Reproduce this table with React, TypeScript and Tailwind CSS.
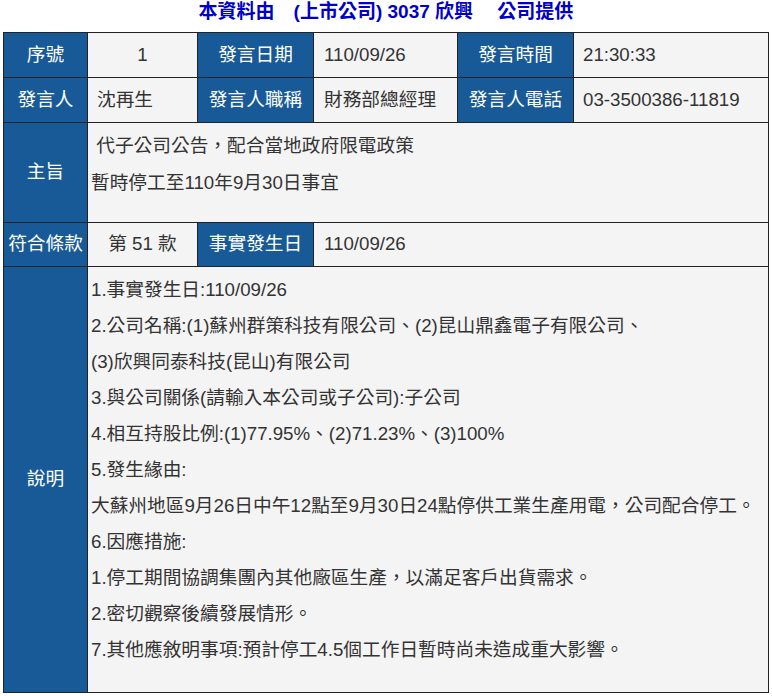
import React from 'react';

const FONT = "font-['Liberation_Sans','Noto_Sans_CJK_TC',sans-serif]";

const Head: React.FC<{ children: React.ReactNode; className?: string }> = ({ children, className = '' }) => (
  <div className={`bg-[#175a97] text-white flex items-center justify-center ${className}`}>{children}</div>
);

const Cell: React.FC<{ children: React.ReactNode; className?: string }> = ({ children, className = '' }) => (
  <div className={`bg-[#f4f4f4] text-[#333] flex items-center ${className}`}>{children}</div>
);

const details = [
  '1.事實發生日:110/09/26',
  '2.公司名稱:(1)蘇州群策科技有限公司、(2)昆山鼎鑫電子有限公司、',
  '(3)欣興同泰科技(昆山)有限公司',
  '3.與公司關係(請輸入本公司或子公司):子公司',
  '4.相互持股比例:(1)77.95%、(2)71.23%、(3)100%',
  '5.發生緣由:',
  '大蘇州地區9月26日中午12點至9月30日24點停供工業生產用電，公司配合停工。',
  '6.因應措施:',
  '1.停工期間協調集團內其他廠區生產，以滿足客戶出貨需求。',
  '2.密切觀察後續發展情形。',
  '7.其他應敘明事項:預計停工4.5個工作日暫時尚未造成重大影響。',
];

export default function App() {
  return (
    <div className={`${FONT} w-[772px] h-[696px] bg-white`}>
      {/* Title */}
      <div className="h-[32px] text-center text-[19px] leading-[24px] font-bold text-[#0000cc] whitespace-pre">
        {'本資料由　(上市公司) 3037 欣興　 公司提供'}
      </div>

      {/* Announcement table */}
      <div className="mx-auto w-[766px] bg-[#222] p-px grid grid-cols-[83px_109px_115px_143px_115px_194px] grid-rows-[44px_44px_99px_43px_425px] gap-px text-[18.7px]">
        <Head>序號</Head>
        <Cell className="justify-center">1</Cell>
        <Head>發言日期</Head>
        <Cell className="pl-[10px]">110/09/26</Cell>
        <Head>發言時間</Head>
        <Cell className="pl-[9px]">21:30:33</Cell>

        <Head>發言人</Head>
        <Cell className="pl-[9px]">沈再生</Cell>
        <Head>發言人職稱</Head>
        <Cell className="pl-[10px]">財務部總經理</Cell>
        <Head>發言人電話</Head>
        <Cell className="pl-[9px]">03-3500386-11819</Cell>

        <Head>主旨</Head>
        <Cell className="col-span-5 !items-start pl-[3px] pt-[4px]">
          <div className="leading-[37px] whitespace-pre">
            <div>{' 代子公司公告，配合當地政府限電政策'}</div>
            <div>暫時停工至110年9月30日事宜</div>
          </div>
        </Cell>

        <Head>符合條款</Head>
        <Cell className="justify-center">第 51 款</Cell>
        <Head>事實發生日</Head>
        <Cell className="col-span-3 pl-[10px]">110/09/26</Cell>

        <Head>說明</Head>
        <Cell className="col-span-5 !items-start pl-[3px] pt-[5px]">
          <div className="leading-[36px]">
            {details.map((line, i) => (
              <div key={i}>{line}</div>
            ))}
          </div>
        </Cell>
      </div>
    </div>
  );
}
